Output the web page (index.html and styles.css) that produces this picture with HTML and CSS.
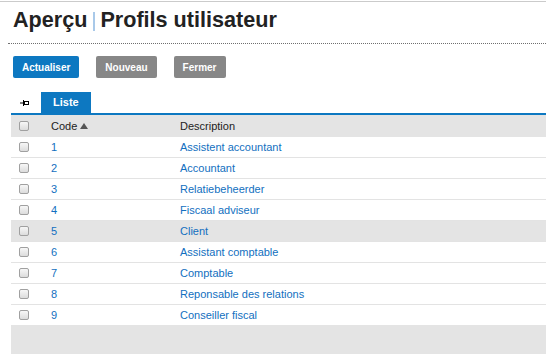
FILE: index.html
```html
<!DOCTYPE html>
<html lang="fr">
<head>
    <meta charset="UTF-8">
    <meta name="viewport" content="width=device-width, initial-scale=1.0">
    <title>Profils utilisateur</title>
    <link rel="stylesheet" href="styles.css">
</head>
<body>
    <div class="topline"></div>

    <!-- En-tête de la page -->
    <div class="page-head">
        <h1>Aperçu<span class="sep"></span>Profils utilisateur</h1>
    </div>

    <!-- Barre d'actions -->
    <div class="toolbar">
        <button class="btn btn-primary">Actualiser</button>
        <button class="btn">Nouveau</button>
        <button class="btn">Fermer</button>
    </div>

    <!-- Onglets -->
    <div class="tabs">
        <span class="pin">
            <svg width="10" height="6" viewBox="0 0 10 6">
                <path d="M0 3h3" stroke="#000" stroke-width="1"/>
                <rect x="4.5" y="1.5" width="4" height="3" fill="none" stroke="#000" stroke-width="1"/>
                <path d="M3.5 0v6" stroke="#000" stroke-width="1"/>
            </svg>
        </span>
        <span class="tab">Liste</span>
    </div>

    <!-- Liste des profils -->
    <div class="grid">
        <div class="row head">
            <div class="cell"><span class="cb"></span></div>
            <div class="cell">Code<span class="sort"></span></div>
            <div class="cell">Description</div>
        </div>
        <div id="rows"></div>
        <div class="grid-foot"></div>
    </div>

    <script>
        const profils = [
            { code: 1, desc: "Assistent accountant" },
            { code: 2, desc: "Accountant" },
            { code: 3, desc: "Relatiebeheerder" },
            { code: 4, desc: "Fiscaal adviseur" },
            { code: 5, desc: "Client" },
            { code: 6, desc: "Assistant comptable" },
            { code: 7, desc: "Comptable" },
            { code: 8, desc: "Reponsable des relations" },
            { code: 9, desc: "Conseiller fiscal" }
        ];

        const rowsContainer = document.getElementById('rows');

        profils.forEach(p => {
            const row = document.createElement('div');
            row.className = 'row' + (p.code === 5 ? ' selected' : '');
            row.innerHTML =
                '<div class="cell"><span class="cb"></span></div>' +
                '<div class="cell"><a href="#">' + p.code + '</a></div>' +
                '<div class="cell"><a href="#">' + p.desc + '</a></div>';
            rowsContainer.appendChild(row);
        });
    </script>
</body>
</html>
```

FILE: styles.css
```css
html, body {
    overflow: hidden;
}

body {
    margin: 0;
    padding: 0;
    background-color: #ffffff;
    font-family: "Liberation Sans", Arial, sans-serif;
    color: #333;
}

.topline {
    margin-top: 1px;
    height: 1px;
    background-color: #cbcbcb;
}

.page-head {
    margin: 6px 0 0 8px;
    padding: 0 0 11px 5px;
    border-bottom: 1px dotted #6f6f6f;
}

h1 {
    margin: 0;
    font-size: 21.6px;
    line-height: 24px;
    font-weight: bold;
    color: #222;
}

.sep {
    display: inline-block;
    width: 2px;
    height: 19px;
    margin: 0 5px 0 6px;
    vertical-align: -4px;
    background-color: #a9c9e9;
}

.toolbar {
    display: flex;
    gap: 17px;
    margin: 12px 0 0 13px;
}

.btn {
    height: 22px;
    padding: 0 9px;
    font-family: "Liberation Sans", Arial, sans-serif;
    font-size: 10px;
    font-weight: bold;
    color: #ffffff;
    background-color: #878787;
    border: none;
    border-radius: 2px;
    cursor: pointer;
}

.btn-primary {
    background-color: #0d78c1;
}

.tabs {
    display: flex;
    align-items: center;
    margin: 14px 0 0 11px;
    border-bottom: 2px solid #0d78c1;
}

.pin {
    display: flex;
    width: 10px;
    margin: 0 11px 0 9px;
    padding-top: 1px;
}

.tab {
    padding: 0 12px;
    line-height: 21px;
    font-size: 11px;
    font-weight: bold;
    color: #ffffff;
    background-color: #0d78c1;
}

.grid {
    margin-left: 11px;
    font-size: 11px;
}

.row {
    display: grid;
    grid-template-columns: 40px 129px 1fr;
    align-items: center;
    height: 21px;
    border-bottom: 1px solid #e3e3e3;
    box-sizing: border-box;
}

#rows .row:last-child {
    border-bottom: none;
    height: 20px;
}

.row.head {
    height: 22px;
    border-bottom: none;
    background-color: #e4e4e4;
    color: #222;
}

.row.selected {
    background-color: #e4e4e4;
}

.cell {
    display: flex;
    align-items: center;
    white-space: nowrap;
}

.cell a {
    color: #126fc0;
    text-decoration: none;
}

.cb {
    display: inline-block;
    width: 8px;
    height: 8px;
    margin-left: 8px;
    border: 1px solid #a0a0a0;
    border-radius: 2px;
    background: linear-gradient(#f7f7f7, #dcdcdc);
}

.sort {
    display: inline-block;
    width: 0;
    height: 0;
    margin-left: 3px;
    border-left: 4px solid transparent;
    border-right: 4px solid transparent;
    border-bottom: 6px solid #555;
}

.grid-foot {
    height: 40px;
    background-color: #e4e4e4;
}
```
